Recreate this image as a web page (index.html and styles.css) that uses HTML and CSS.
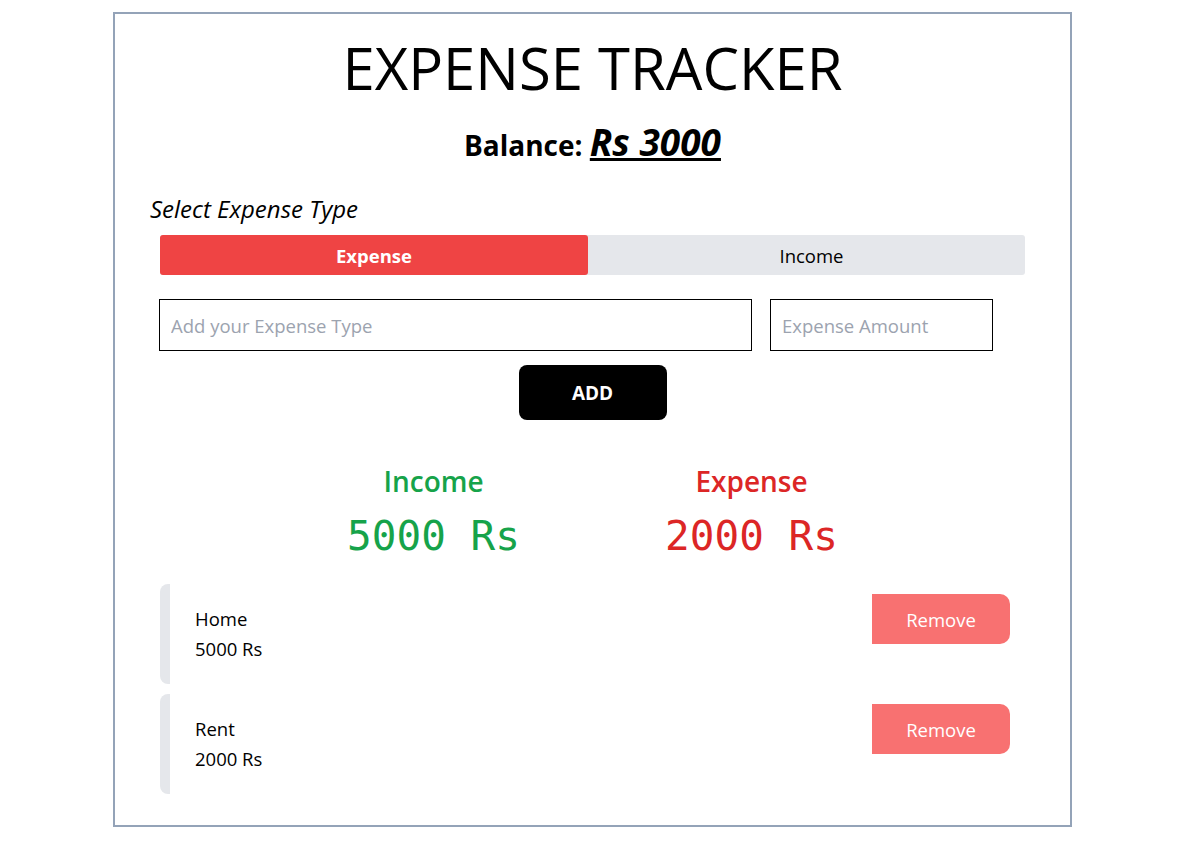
FILE: index.html
```html
<!DOCTYPE html>
<html lang="en">
<head>
<meta charset="utf-8">
<title>Expense Tracker</title>
<link rel="stylesheet" href="styles.css">
</head>
<body>
<div class="app">
  <h1 class="title">EXPENSE TRACKER</h1>
  <h2 class="balance">Balance: <span class="balance-amount">Rs 3000</span></h2>
  <p class="select-label">Select Expense Type</p>
  <div class="toggle">
    <button class="toggle-btn active">Expense</button>
    <button class="toggle-btn">Income</button>
  </div>
  <div class="inputs">
    <input class="field field-type" type="text" placeholder="Add your Expense Type">
    <input class="field field-amount" type="text" placeholder="Expense Amount">
  </div>
  <div class="add-row">
    <button class="add-btn">ADD</button>
  </div>
  <div class="stats">
    <div class="stat">
      <div class="stat-label income">Income</div>
      <div class="stat-value income">5000 Rs</div>
    </div>
    <div class="stat">
      <div class="stat-label expense">Expense</div>
      <div class="stat-value expense">2000 Rs</div>
    </div>
  </div>
  <ul class="list">
    <li class="item">
      <div class="item-text">
        <div>Home</div>
        <div>5000 Rs</div>
      </div>
      <button class="remove-btn">Remove</button>
    </li>
    <li class="item">
      <div class="item-text">
        <div>Rent</div>
        <div>2000 Rs</div>
      </div>
      <button class="remove-btn">Remove</button>
    </li>
  </ul>
</div>
</body>
</html>
```

FILE: styles.css
```css
* { box-sizing: border-box; }

body {
  margin: 0;
  font-family: "Open Sans", "Noto Sans", sans-serif;
  color: #000;
  background: #fff;
}

.app {
  width: 959px;
  height: 815px;
  margin: 12px 0 0 113px;
  border: 2px solid #94a3b8;
  padding: 20px 45px 0 45px;
}

.title {
  margin: 0;
  text-align: center;
  font-size: 58px;
  font-weight: 400;
  line-height: 68px;
}

.balance {
  margin: 20px 0 0;
  text-align: center;
  font-size: 28px;
  font-weight: 700;
  line-height: 40px;
}

.balance-amount {
  font-size: 37px;
  font-style: italic;
  text-decoration: underline;
}

.select-label {
  margin: 28px 0 0 -10px;
  font-size: 24px;
  font-style: italic;
  line-height: 32px;
}

.toggle {
  margin-top: 10px;
  display: flex;
  height: 40px;
  border-radius: 3px;
  background: #e5e7eb;
}

.toggle-btn {
  flex: 1 1 0;
  border: 0;
  background: transparent;
  font-family: inherit;
  font-size: 18.5px;
  color: #000;
  border-radius: 3px;
  padding: 0 0 0 10px;
}

.toggle-btn.active {
  flex: 0 0 428px;
  padding: 0;
  background: #ef4444;
  color: #fff;
  font-weight: 700;
}

.inputs {
  margin: 24px 0 0 -1px;
  display: flex;
  gap: 18px;
}

.field {
  height: 52px;
  border: 1px solid #000;
  padding: 0 11px;
  font-family: inherit;
  font-size: 18.5px;
  outline: none;
}

.field::placeholder { color: #9ca3af; }

.field-type { width: 593px; }
.field-amount { width: 223px; }

.add-row {
  margin-top: 14px;
  display: flex;
  justify-content: center;
}

.add-btn {
  width: 148px;
  height: 55px;
  border: 0;
  border-radius: 8px;
  background: #000;
  color: #fff;
  font-family: inherit;
  font-size: 19px;
  font-weight: 700;
}

.stats {
  margin-top: 41px;
  display: grid;
  grid-template-columns: 318px 318px;
  justify-content: center;
}

.stat { text-align: center; }

.stat-label {
  font-size: 28px;
  font-weight: 600;
  line-height: 40px;
}

.stat-value {
  margin-top: 9px;
  font-family: "DejaVu Sans Mono", "Liberation Mono", monospace;
  font-size: 41px;
  line-height: 52px;
}

.income { color: #16a34a; }
.expense { color: #dc2626; }

.list {
  list-style: none;
  margin: 22px 0 0;
  padding: 0;
  display: flex;
  flex-direction: column;
  gap: 10px;
}

.item {
  display: flex;
  justify-content: space-between;
  align-items: center;
  height: 100px;
  margin-right: 15px;
  border-left: 10px solid #e5e7eb;
  border-radius: 8px 0 0 8px;
  padding: 0 0 0 25px;
}

.item-text {
  font-size: 18.5px;
  line-height: 30px;
}

.remove-btn {
  align-self: flex-start;
  margin-top: 10px;
  width: 138px;
  height: 50px;
  border: 0;
  border-radius: 0 10px 10px 0;
  background: #f87171;
  color: #fff;
  font-family: inherit;
  font-size: 18.5px;
}
```
